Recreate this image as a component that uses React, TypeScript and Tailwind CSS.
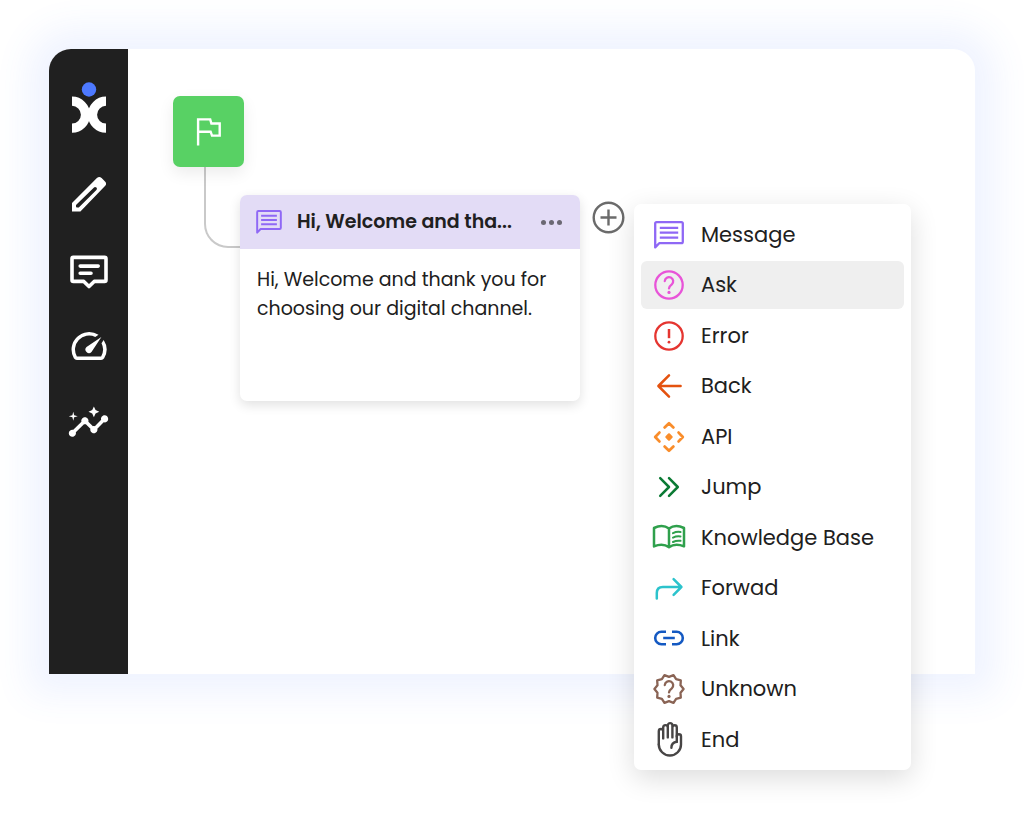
import React, { useState } from 'react';
import { MdInsights, MdSpeed } from 'react-icons/md';

interface IconProps {
  className?: string;
}

function LogoIcon() {
  return (
    <svg width="36" height="52" viewBox="0 0 36 52" fill="none" aria-hidden="true">
      <circle cx="18" cy="7.5" r="7.2" fill="#4d79ff" />
      <path d="M1 19.2a13.5 13.5 0 0 1 0 27" stroke="#fff" strokeWidth="9.2" />
      <path d="M35 19.2a13.5 13.5 0 0 0 0 27" stroke="#fff" strokeWidth="9.2" />
    </svg>
  );
}

function PencilIcon() {
  return (
    <svg width="34" height="35" viewBox="0 0 34 35" aria-hidden="true">
      <path
        fill="#fff"
        fillRule="evenodd"
        d="M0 25.9 24.9 1.1Q27.3-1 29.6 1.1L33 4.5Q35.2 6.8 33 9.1L8.4 34.4H0ZM4 28V29.6Q4 30.6 5 30.6H6.8L24.4 13Q25.4 11.8 24.4 10.6 23.2 9.6 22 10.4Z"
      />
    </svg>
  );
}

function CommentIcon() {
  return (
    <svg width="38" height="39" viewBox="0 -4 38 39" fill="none" stroke="#fff" strokeWidth="3.6" strokeLinejoin="round" strokeLinecap="round" aria-hidden="true">
      <path d="M3.2 2.4H34.6q1.4 0 1.4 1.4V25q0 1.4-1.4 1.4H24.2L19 31.6 13.8 26.4H3.4Q2 26.4 2 25V3.8Q2 2.4 3.2 2.4Z" />
      <path d="M10.2 11.1H28.2M10.2 18.3H21" />
    </svg>
  );
}

function FlagIcon() {
  return (
    <svg width="25" height="28" viewBox="0 0 25 28" fill="none" stroke="#fff" strokeWidth="2.4" aria-hidden="true">
      <path d="M2.1 27.6V1.4H14.2L15.4 5.5H23.7V17.6H16L14.6 13.7H2.1" />
    </svg>
  );
}

function MessageIcon({ className }: IconProps) {
  return (
    <svg viewBox="0 0 30 28" className={className} fill="none" stroke="#8f68f5" strokeWidth="2.3" strokeLinejoin="round" aria-hidden="true">
      <path d="M1.2 26.4V2.6Q1.2 1.2 2.6 1.2H27.4Q28.8 1.2 28.8 2.6V20.8Q28.8 22.2 27.4 22.2H5.2Z" />
      <path d="M5.8 6.8H24.2M5.8 11.7H24.2M5.8 16.6H24.2" />
    </svg>
  );
}

function QuestionMark({ color }: { color: string }) {
  return (
    <>
      <path d="M-4.2-4a4.2 4.2 0 1 1 7 3.4C.9.9 0 1.7 0 3.4" />
      <circle cy="7.4" r="1.6" fill={color} stroke="none" />
    </>
  );
}

function badgePoints() {
  const points: string[] = [];
  for (let i = 0; i < 20; i++) {
    const angle = (i * Math.PI) / 10;
    const radius = i % 2 === 0 ? 14.6 : 12.1;
    points.push(`${(radius * Math.cos(angle)).toFixed(2)},${(radius * Math.sin(angle)).toFixed(2)}`);
  }
  return points.join(' ');
}

interface GlyphProps {
  color: string;
  children: React.ReactNode;
}

// every menu glyph is drawn around the origin of a 36px box
function Glyph({ color, children }: GlyphProps) {
  return (
    <svg width="36" height="36" viewBox="-18 -18 36 36" fill="none" stroke={color} strokeWidth="2.3" strokeLinecap="round" strokeLinejoin="round" aria-hidden="true">
      {children}
    </svg>
  );
}

const menuItems = [
  { label: 'Message', icon: <MessageIcon className="h-7 w-[30px]" /> },
  {
    label: 'Ask',
    icon: (
      <Glyph color="#e854d8">
        <circle r="13.7" />
        <QuestionMark color="#e854d8" />
      </Glyph>
    ),
  },
  {
    label: 'Error',
    icon: (
      <Glyph color="#e53530">
        <circle r="13.7" />
        <path d="M0-7V2.2" strokeLinecap="butt" strokeWidth="2.5" />
        <circle cy="6.2" r="1.4" fill="#e53530" stroke="none" />
      </Glyph>
    ),
  },
  {
    label: 'Back',
    icon: (
      <Glyph color="#e4520f">
        <path d="M11.6 0H-10.4M0-10.6-10.6 0 0 10.6" strokeWidth="2.5" />
      </Glyph>
    ),
  },
  {
    label: 'API',
    icon: (
      <Glyph color="#f98d2b">
        <g strokeWidth="2.8">
          <path d="M-4.4-9.6 0-13.8 4.4-9.6M-4.4 9.6 0 13.8 4.4 9.6M-9.6-4.4-13.8 0-9.6 4.4M9.6-4.4 13.8 0 9.6 4.4" />
        </g>
        <path d="M0-2.6 2.6 0 0 2.6-2.6 0Z" fill="#f98d2b" />
      </Glyph>
    ),
  },
  {
    label: 'Jump',
    icon: (
      <Glyph color="#0b7a34">
        <path d="M-8.8-8.8 0 0-8.8 8.8M0-8.8 8.8 0 0 8.8" strokeWidth="2.5" />
      </Glyph>
    ),
  },
  {
    label: 'Knowledge Base',
    icon: (
      <Glyph color="#2fa04c">
        <path d="M0-8.4C-4-11.4-10-11.4-15-9V9.4C-10 7.4-4 7.4 0 10.2 4 7.4 10 7.4 15 9.4V-9C10-11.4 4-11.4 0-8.4ZM0-8V10" strokeWidth="2.5" />
        <path d="M4-3.8Q7.5-5.6 11.5-5M4 .6Q7.5-1.2 11.5-.6M4 5Q7.5 3.2 11.5 3.8" strokeWidth="2" />
      </Glyph>
    ),
  },
  {
    label: 'Forwad',
    icon: (
      <Glyph color="#2cc3cc">
        <path d="M-12.2 10.6V5Q-12.2-1-6.2-1H12.4M4.6-8.8 12.4-1 4.6 6.8" strokeWidth="2.5" />
      </Glyph>
    ),
  },
  {
    label: 'Link',
    icon: (
      <Glyph color="#1459c2">
        <path d="M-3-6.2H-7.6a6.2 6.2 0 0 0 0 12.4H-3M3-6.2H7.6a6.2 6.2 0 0 1 0 12.4H3M-5.8 0H5.8" strokeWidth="2.6" strokeLinecap="butt" />
      </Glyph>
    ),
  },
  {
    label: 'Unknown',
    icon: (
      <Glyph color="#8a6455">
        <polygon points={badgePoints()} />
        <QuestionMark color="#8a6455" />
      </Glyph>
    ),
  },
  {
    label: 'End',
    icon: (
      <Glyph color="#474545">
        <g transform="translate(-11.4 -17.2)" strokeWidth="2.4">
          <path d="M1.2 22.6V9.4a2.2 2.2 0 0 1 4.4 0V16.6M5.6 9V5.6a2.3 2.3 0 0 1 4.6 0V15.6M10.2 5.6V3.6a2.3 2.3 0 0 1 4.6 0V15.6M14.8 5.6a2.2 2.2 0 0 1 4.4 0V20" />
          <path d="M19.2 14.6a2.1 2.1 0 0 1 4.2 0V22.6a11.1 11.1 0 0 1-22.2 0M19.2 20C16 20.4 13.8 22.6 13.8 26" />
        </g>
      </Glyph>
    ),
  },
];

const navItems = [
  { label: 'Edit', icon: <PencilIcon /> },
  { label: 'Conversations', icon: <CommentIcon /> },
  { label: 'Performance', icon: <MdSpeed className="size-[42px]" /> },
  { label: 'Insights', icon: <MdInsights className="size-[43px]" /> },
];

function Sidebar() {
  return (
    <nav className="flex w-[79px] shrink-0 flex-col items-center rounded-tl-[22px] bg-[#202020] pt-[33px] text-white">
      <a href="#" aria-label="Home">
        <LogoIcon />
      </a>
      <div className="mt-[22px] flex flex-col items-center">
        {navItems.map((item) => (
          <button key={item.label} aria-label={item.label} className="flex h-[76px] w-12 items-center justify-center">
            {item.icon}
          </button>
        ))}
      </div>
    </nav>
  );
}

function MessageCard() {
  return (
    <article className="absolute top-[146px] left-[112px] min-h-[206px] w-[340px] overflow-hidden rounded-[7px] bg-white shadow-[0_4px_12px_rgba(0,0,0,0.12)]">
      <header className="flex h-[54px] items-center bg-[#e3dcf6] pr-[18px] pl-4">
        <MessageIcon className="h-6 w-[26px] shrink-0" />
        <h2 className="ml-[15px] flex-1 text-[19px] font-semibold whitespace-nowrap">Hi, Welcome and tha...</h2>
        <button aria-label="More options" className="flex gap-[3px]">
          <span className="size-[5px] rounded-full bg-[#6b6873]" />
          <span className="size-[5px] rounded-full bg-[#6b6873]" />
          <span className="size-[5px] rounded-full bg-[#6b6873]" />
        </button>
      </header>
      <p className="px-[17px] pt-4 text-[19px] leading-[29px]">
        Hi, Welcome and thank you for choosing our digital channel.
      </p>
    </article>
  );
}

function NodeMenu() {
  const [active, setActive] = useState('Ask');

  return (
    <ul className="absolute top-[155px] left-[506px] flex min-h-[566px] w-[277px] flex-col gap-[3px] rounded-[7px] bg-white p-[7px] shadow-[0_8px_28px_rgba(0,0,0,0.14)]">
      {menuItems.map((item) => (
        <li key={item.label} className="flex flex-1">
          <button
            onClick={() => setActive(item.label)}
            className={`flex w-full items-center gap-[14px] rounded-[6px] pl-[10px] text-left text-[21px] ${
              active === item.label ? 'bg-[#efefef]' : ''
            }`}
          >
            <span className="flex size-9 items-center justify-center">{item.icon}</span>
            {item.label}
          </button>
        </li>
      ))}
    </ul>
  );
}

export default function App() {
  return (
    <div className="flex min-h-screen flex-col bg-white px-[49px] pt-[49px] pb-[145px] font-['Poppins','Inter',sans-serif] text-[#202020]">
      <div className="flex flex-1 rounded-t-[22px] bg-white shadow-[0_0_36px_20px_rgba(77,121,255,0.09)]">
        <Sidebar />
        <main className="relative flex-1">
          <div className="absolute top-[118px] left-[76px] h-[81px] w-10 rounded-bl-[24px] border-b-2 border-l-2 border-[#c9c9c9]" />
          <div className="absolute top-[47px] left-[45px] flex size-[71px] items-center justify-center rounded-[7px] bg-[#58d164] shadow-[0_6px_16px_rgba(0,0,0,0.08)]">
            <FlagIcon />
          </div>
          <MessageCard />
          <button aria-label="Add step" className="absolute top-[152px] left-[464px]">
            <svg width="33" height="33" viewBox="0 0 33 33" fill="none" stroke="#6b6b6b" strokeWidth="2.4" aria-hidden="true">
              <circle cx="16.5" cy="16.5" r="14.8" />
              <path d="M16.5 8.5V24.5M8.5 16.5H24.5" />
            </svg>
          </button>
          <NodeMenu />
        </main>
      </div>
    </div>
  );
}
